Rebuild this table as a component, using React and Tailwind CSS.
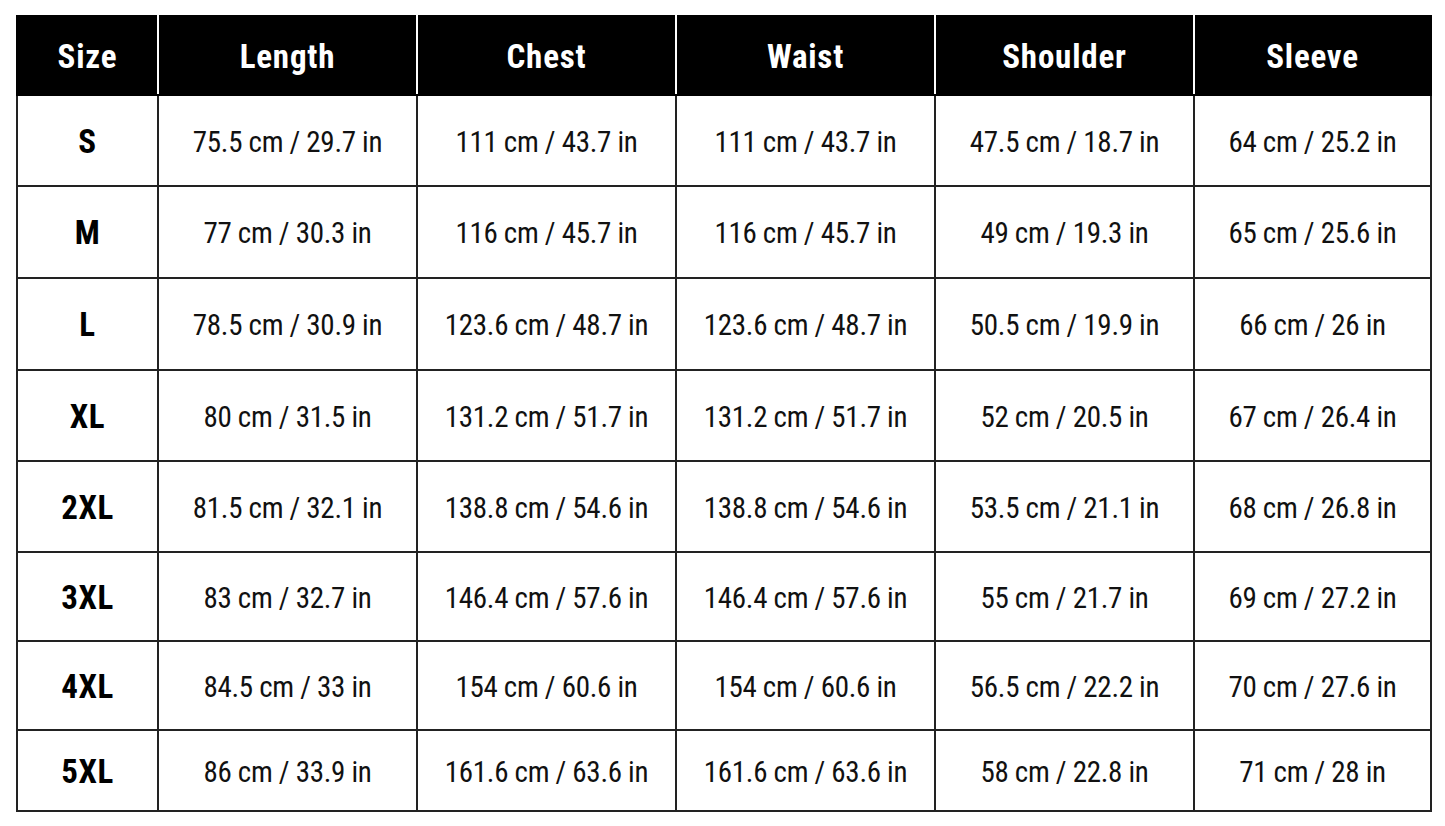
import React from 'react';

const columns = ['Size', 'Length', 'Chest', 'Waist', 'Shoulder', 'Sleeve'];
const widths = ['w-[141px]', 'w-[259px]', 'w-[259px]', 'w-[259px]', 'w-[259px]', 'w-[237px]'];

const rows = [
  { size: 'S', h: 'h-[91px]', vals: ['75.5 cm / 29.7 in', '111 cm / 43.7 in', '111 cm / 43.7 in', '47.5 cm / 18.7 in', '64 cm / 25.2 in'] },
  { size: 'M', h: 'h-[92px]', vals: ['77 cm / 30.3 in', '116 cm / 45.7 in', '116 cm / 45.7 in', '49 cm / 19.3 in', '65 cm / 25.6 in'] },
  { size: 'L', h: 'h-[92px]', vals: ['78.5 cm / 30.9 in', '123.6 cm / 48.7 in', '123.6 cm / 48.7 in', '50.5 cm / 19.9 in', '66 cm / 26 in'] },
  { size: 'XL', h: 'h-[91px]', vals: ['80 cm / 31.5 in', '131.2 cm / 51.7 in', '131.2 cm / 51.7 in', '52 cm / 20.5 in', '67 cm / 26.4 in'] },
  { size: '2XL', h: 'h-[91px]', vals: ['81.5 cm / 32.1 in', '138.8 cm / 54.6 in', '138.8 cm / 54.6 in', '53.5 cm / 21.1 in', '68 cm / 26.8 in'] },
  { size: '3XL', h: 'h-[89px]', vals: ['83 cm / 32.7 in', '146.4 cm / 57.6 in', '146.4 cm / 57.6 in', '55 cm / 21.7 in', '69 cm / 27.2 in'] },
  { size: '4XL', h: 'h-[89px]', vals: ['84.5 cm / 33 in', '154 cm / 60.6 in', '154 cm / 60.6 in', '56.5 cm / 22.2 in', '70 cm / 27.6 in'] },
  { size: '5XL', h: 'h-[81px]', vals: ['86 cm / 33.9 in', '161.6 cm / 63.6 in', '161.6 cm / 63.6 in', '58 cm / 22.8 in', '71 cm / 28 in'] },
];

export default function App() {
  return (
    <div className="w-[1445px] h-[826px] bg-white pt-[15px] pl-[16px]" style={{ fontFamily: '"Roboto Condensed", Roboto, sans-serif' }}>
      <table className="table-fixed border-collapse w-[1414px]">
        <thead>
          <tr className="h-[79px] bg-black text-white">
            {columns.map((c, i) => (
              <th key={c} className={`${widths[i]} border-x-2 border-x-white border-y-2 border-y-black first:border-l-black last:border-r-black text-[33px] font-bold pt-[2px] tracking-[0.8px]`}>
                {c}
              </th>
            ))}
          </tr>
        </thead>
        <tbody>
          {rows.map(r => (
            <tr key={r.size} className={r.h}>
              <td className="border-2 border-[#222] text-center text-[33px] font-bold tracking-[0.5px] text-black pt-[2px]">{r.size}</td>
              {r.vals.map((v, i) => (
                <td key={i} className="border-2 border-[#222] text-center text-[29px] tracking-[-0.3px] text-[#111] pt-[4px]">{v}</td>
              ))}
            </tr>
          ))}
        </tbody>
      </table>
    </div>
  );
}
